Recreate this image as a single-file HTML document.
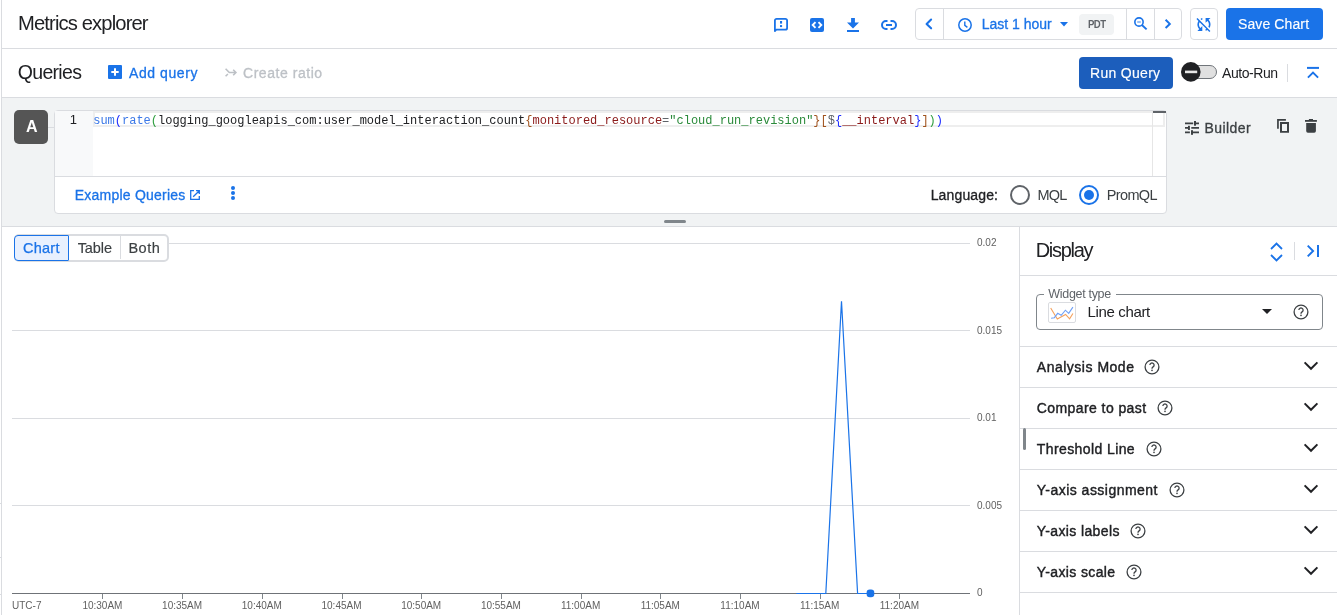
<!DOCTYPE html>
<html><head><meta charset="utf-8">
<style>
*{box-sizing:border-box;margin:0;padding:0}
html,body{width:1337px;height:615px;overflow:hidden;background:#fff;font-family:"Liberation Sans",sans-serif;color:#202124}
.a{position:absolute}
.t{position:absolute;white-space:nowrap;line-height:1}
#root{position:absolute;left:0;top:0;width:1337px;height:615px;will-change:transform}
svg{position:absolute;overflow:visible}
</style></head><body><div id="root">
<div class="a" style="left:1px;top:0px;width:1px;height:615px;background:#dadce0;"></div>
<div class="a" style="left:0px;top:503px;width:1px;height:1px;background:#dadce0;"></div>
<div class="a" style="left:0px;top:557px;width:1px;height:1px;background:#dadce0;"></div>
<div class="a" style="left:0px;top:594px;width:1px;height:1px;background:#dadce0;"></div>
<div class="a" style="left:2px;top:48px;width:1335px;height:1px;background:#dadce0;"></div>
<div class="t" style="top:13.00px;font-size:20.2px;color:#202124;font-family:'Liberation Sans',sans-serif;letter-spacing:-0.867px;left:18px;">Metrics explorer</div>
<svg style="left:774px;top:18px" width="14" height="14" viewBox="0 0 14 14"><path d="M0.9 13V2.6A1.7 1.7 0 0 1 2.6 0.9h8.8A1.7 1.7 0 0 1 13.1 2.6v7.3a1.7 1.7 0 0 1-1.7 1.7H2.3L0.9 13z" stroke="#1a73e8" stroke-width="1.8" stroke-linejoin="round" fill="none"/><rect x="6" y="3" width="2.1" height="2.6" fill="#1a73e8"/><rect x="6" y="7.1" width="2.1" height="2" fill="#1a73e8"/></svg>
<svg style="left:810px;top:18px" width="14" height="14" viewBox="0 0 14 14"><rect x="0" y="0" width="14" height="14" rx="2" fill="#1a73e8"/><path d="M5.5 4.2L2.7 7l2.8 2.8M8.5 4.2L11.3 7 8.5 9.8" stroke="#fff" stroke-width="1.9" fill="none"/></svg>
<svg style="left:847px;top:18px" width="12" height="14" viewBox="0 0 12 14"><path fill="#1a73e8" d="M4.1 0h3.8v4.5H12L6 10.6 0 4.5H4.1z"/><rect x="0" y="12" width="12" height="2" fill="#1a73e8"/></svg>
<svg style="left:881px;top:20px" width="16" height="10" viewBox="0 0 16 10"><path d="M6.5 1H5a4 4 0 0 0 0 8h1.5M9.5 1H11a4 4 0 0 1 0 8H9.5M5 5h6" stroke="#1a73e8" stroke-width="2" fill="none"/></svg>
<div class="a" style="left:915px;top:8px;width:267px;height:32px;border:1px solid #dadce0;border-radius:4px;"></div>
<div class="a" style="left:943px;top:9px;width:1px;height:30px;background:#dadce0;"></div>
<div class="a" style="left:1126px;top:9px;width:1px;height:30px;background:#dadce0;"></div>
<div class="a" style="left:1154px;top:9px;width:1px;height:30px;background:#dadce0;"></div>
<svg style="left:925px;top:19px" width="8" height="11" viewBox="0 0 8 11"><path d="M6.1 0.5L1.6 4.9 6.1 9.3" stroke="#1a73e8" stroke-width="2.1" stroke-linecap="round" stroke-linejoin="round" fill="none"/></svg>
<svg style="left:958px;top:18px" width="15" height="15" viewBox="0 0 15 15"><circle cx="7" cy="7" r="6.2" stroke="#1a73e8" stroke-width="1.5" fill="none"/><path d="M6.8 3.6v3.8l2.6 2" stroke="#1a73e8" stroke-width="1.4" fill="none"/></svg>
<div class="t" style="top:17.00px;font-size:14px;color:#1a73e8;font-family:'Liberation Sans',sans-serif;left:981.7px;-webkit-text-stroke:0.3px currentColor;">Last 1 hour</div>
<svg style="left:1060px;top:22px" width="8" height="5" viewBox="0 0 8 5"><path d="M0 0h8L4 4.5z" fill="#1a73e8"/></svg>
<div class="a" style="left:1079px;top:14px;width:35px;height:21px;background:#f1f3f4;border-radius:4px;"></div>
<div class="t" style="top:20.00px;font-size:9.6px;color:#5f6368;font-family:'Liberation Sans',sans-serif;font-weight:700;letter-spacing:-0.45px;left:1087.9px;transform:scaleY(1.16);transform-origin:0 8.6px;">PDT</div>
<svg style="left:1133px;top:17px" width="15" height="14" viewBox="0 0 15 14"><circle cx="6" cy="5" r="4.15" stroke="#1a73e8" stroke-width="1.6" fill="none"/><path d="M8.9 8L13.6 12.4" stroke="#1a73e8" stroke-width="1.9"/><path d="M4.2 5h3.6" stroke="#1a73e8" stroke-width="1.1" opacity="0.8"/></svg>
<svg style="left:1164px;top:19px" width="8" height="10" viewBox="0 0 8 10"><path d="M1.6 0.8L5.8 4.9 1.6 9" stroke="#1a73e8" stroke-width="2" fill="none"/></svg>
<div class="a" style="left:1190px;top:8px;width:28px;height:32px;border:1px solid #dadce0;border-radius:4px;"></div>
<svg style="left:0;top:0" width="1337" height="615" viewBox="0 0 1337 615"><path transform="translate(1194.1,14.6) scale(0.8208333333333333) translate(-0.0,-0.0)" fill="#1a73e8" d="M10 6.35V4.26c-.8.21-1.55.54-2.23.96l1.46 1.46c.25-.12.5-.24.77-.33zm-7.14-.94l2.36 2.36C4.45 8.99 4 10.44 4 12c0 2.21.91 4.2 2.36 5.64L4 20h6v-6l-2.24 2.24C6.68 15.15 6 13.66 6 12c0-1 .25-1.94.68-2.77l8.08 8.08c-.25.13-.5.25-.77.34v2.09c.8-.21 1.55-.54 2.230-.96l2.36 2.36 1.27-1.27L4.14 4.14 2.86 5.41zM20 4h-6v6l2.24-2.24C17.32 8.85 18 10.34 18 12c0 1-.25 1.940-.68 2.77l1.46 1.46C19.550 15.01 20 13.56 20 12c0-2.21-.91-4.2-2.36-5.64L20 4z" /></svg>
<div class="a" style="left:1226px;top:8px;width:97px;height:32px;background:#1a73e8;border-radius:4px;"></div>
<div class="t" style="top:17.00px;font-size:14px;color:#fff;font-family:'Liberation Sans',sans-serif;letter-spacing:0.111px;left:1238px;-webkit-text-stroke:0.15px currentColor;">Save Chart</div>
<div class="a" style="left:2px;top:97px;width:1335px;height:1px;background:#dadce0;"></div>
<div class="t" style="top:63.00px;font-size:19.5px;color:#202124;font-family:'Liberation Sans',sans-serif;letter-spacing:-0.7px;left:17.8px;">Queries</div>
<svg style="left:108px;top:65px" width="14" height="14" viewBox="0 0 14 14"><rect width="14" height="14" rx="1" fill="#1a73e8"/><path d="M7 3.3v7.4M3.3 7h7.4" stroke="#fff" stroke-width="2"/></svg>
<div class="t" style="top:66.00px;font-size:14px;color:#1a73e8;font-family:'Liberation Sans',sans-serif;letter-spacing:0.575px;left:129px;-webkit-text-stroke:0.3px currentColor;">Add query</div>
<svg style="left:0;top:0" width="1337" height="615" viewBox="0 0 1337 615"><path d="M225.6 68.8L229.3 72.5H236M233.2 69.8L235.9 72.5 233.2 75.2M225.6 76.3L227.9 74" stroke="#bdc1c6" stroke-width="1.6" fill="none"/></svg>
<div class="t" style="top:66.00px;font-size:14px;color:#bdc1c6;font-family:'Liberation Sans',sans-serif;letter-spacing:0.545px;left:243px;-webkit-text-stroke:0.3px currentColor;">Create ratio</div>
<div class="a" style="left:1079px;top:57px;width:94px;height:32px;background:#1c5ebc;border-radius:4px;"></div>
<div class="t" style="top:66.00px;font-size:14px;color:#fff;font-family:'Liberation Sans',sans-serif;letter-spacing:0.3px;left:1090px;-webkit-text-stroke:0.15px currentColor;">Run Query</div>
<div class="a" style="left:1186px;top:65px;width:31px;height:14px;background:#e0e0e0;border-radius:7px;border:1px solid #70757a;"></div>
<svg style="left:1181px;top:62px" width="20" height="20" viewBox="0 0 20 20"><circle cx="9.8" cy="9.9" r="9.8" fill="#202124"/><rect x="4" y="8.6" width="12.2" height="2.6" fill="#e8e8e8"/></svg>
<div class="t" style="top:66.00px;font-size:14px;color:#202124;font-family:'Liberation Sans',sans-serif;letter-spacing:-0.429px;left:1222px;">Auto-Run</div>
<div class="a" style="left:1287px;top:64px;width:1px;height:18px;background:#dadce0;"></div>
<svg style="left:1307px;top:67px" width="13" height="12" viewBox="0 0 13 12"><path d="M0 0.9h12" stroke="#1a73e8" stroke-width="2"/><path d="M0.9 10.6L6 5.5 11.1 10.6" stroke="#1a73e8" stroke-width="1.9" fill="none"/></svg>
<div class="a" style="left:2px;top:98px;width:1335px;height:128px;background:#f1f3f4;"></div>
<div class="a" style="left:2px;top:226px;width:1335px;height:1px;background:#dadce0;"></div>
<div class="a" style="left:14px;top:110px;width:34px;height:34px;background:#555555;border-radius:5px;"></div>
<div class="t" style="top:119.00px;font-size:16px;color:#fff;font-family:'Liberation Sans',sans-serif;font-weight:700;left:26px;">A</div>
<div class="a" style="left:48px;top:127px;width:6px;height:1px;background:#dadce0;"></div>
<div class="a" style="left:54px;top:110px;width:1113px;height:104px;border:1px solid #dadce0;border-radius:4px;background:#fff;"></div>
<div class="a" style="left:55px;top:111px;width:38px;height:65px;background:#f8f9fa;"></div>
<div class="a" style="left:55px;top:176px;width:1111px;height:1px;background:#dadce0;"></div>
<div class="t" style="top:113.00px;font-size:13px;color:#202124;font-family:'Liberation Sans',sans-serif;left:69.7px;">1</div>
<div class="a" style="left:93px;top:111px;width:1072px;height:16px;border:2px solid #eeeeee;"></div>
<div class="a" style="left:1152px;top:111px;width:1px;height:65px;background:#e6e6e6;"></div>
<div class="a" style="left:1153px;top:111px;width:13px;height:1.5px;background:#5f6368;"></div>
<div class="t" style="top:114.81px;font-size:12px;color:#202124;font-family:'Liberation Mono',monospace;left:93.2px;"><span style="color:#3b78e7">sum</span><span style="color:#1f2dff">(</span><span style="color:#3b78e7">rate</span><span style="color:#2e9e3e">(</span><span style="color:#202124">logging_googleapis_com:user_model_interaction_count</span><span style="color:#a0521d">{</span><span style="color:#8b1a1a">monitored_resource</span><span style="color:#5f6368">=</span><span style="color:#2a8a3a">"cloud_run_revision"</span><span style="color:#a0521d">}[</span><span style="color:#5f6368">$</span><span style="color:#1f2dff">{</span><span style="color:#8b1a1a">__interval</span><span style="color:#1f2dff">}</span><span style="color:#a0521d">]</span><span style="color:#2e9e3e">)</span><span style="color:#1f2dff">)</span></div>
<div class="t" style="top:188.00px;font-size:14px;color:#1a73e8;font-family:'Liberation Sans',sans-serif;letter-spacing:0.236px;left:74.7px;-webkit-text-stroke:0.3px currentColor;">Example Queries</div>
<svg style="left:190px;top:190px" width="10" height="10" viewBox="0 0 10 10"><path d="M4 0.7H0.7v8.6h8.6V6M6 0.7h3.3V4M9.3 0.7L3.2 6.8" stroke="#1a73e8" stroke-width="1.3" fill="none"/></svg>
<svg style="left:231px;top:186px" width="4" height="14" viewBox="0 0 4 14"><circle cx="2" cy="2" r="2" fill="#1a73e8"/><circle cx="2" cy="7" r="2" fill="#1a73e8"/><circle cx="2" cy="12" r="2" fill="#1a73e8"/></svg>
<div class="t" style="top:188.00px;font-size:14px;color:#202124;font-family:'Liberation Sans',sans-serif;letter-spacing:0.137px;left:930.7px;-webkit-text-stroke:0.3px currentColor;">Language:</div>
<svg style="left:1010px;top:185px" width="20" height="20" viewBox="0 0 20 20"><circle cx="10" cy="10" r="9" stroke="#5f6368" stroke-width="2" fill="none"/></svg>
<div class="t" style="top:188.00px;font-size:14.5px;color:#3c4043;font-family:'Liberation Sans',sans-serif;letter-spacing:-0.9px;left:1037.6px;">MQL</div>
<svg style="left:1079px;top:185px" width="20" height="20" viewBox="0 0 20 20"><circle cx="10" cy="10" r="9" stroke="#1a73e8" stroke-width="2" fill="none"/><circle cx="10" cy="10" r="5" fill="#1a73e8"/></svg>
<div class="t" style="top:188.00px;font-size:14.5px;color:#3c4043;font-family:'Liberation Sans',sans-serif;letter-spacing:-0.62px;left:1106.7px;">PromQL</div>
<svg style="left:0;top:0" width="1337" height="615" viewBox="0 0 1337 615"><g stroke="#3c4043" stroke-width="1.7"><path d="M1185 123.4H1193.2M1196 123.4H1199M1185 127.9H1188.4M1191.3 127.9H1199M1185 132.4H1189.9M1193 132.4H1199"/></g><g fill="#3c4043"><rect x="1194" y="121" width="2" height="4.7"/><rect x="1188" y="125.8" width="1.9" height="4.2"/><rect x="1191" y="130.2" width="2" height="4.6"/></g></svg>
<div class="t" style="top:121.00px;font-size:14px;color:#3c4043;font-family:'Liberation Sans',sans-serif;letter-spacing:0.4px;left:1204.6px;-webkit-text-stroke:0.3px currentColor;">Builder</div>
<svg style="left:0;top:0" width="1337" height="615" viewBox="0 0 1337 615">
<path d="M1277.1 128.8V119.1h8.8v1.6h-7.1v8.1z" fill="#3c4043"/>
<path fill-rule="evenodd" d="M1280 122h9v10.7h-9zM1282 124v7h5v-7z" fill="#3c4043"/>
<rect x="1305" y="120" width="11.9" height="1.8" fill="#3c4043"/><rect x="1308.9" y="119" width="4.1" height="1.5" fill="#3c4043"/>
<path d="M1306.2 123h9.7v8a1.7 1.7 0 0 1-1.7 1.7h-6.3a1.7 1.7 0 0 1-1.7-1.7z" fill="#3c4043"/>
</svg>
<div class="a" style="left:664px;top:220px;width:22px;height:3px;background:#80868b;border-radius:2px;"></div>
<div class="a" style="left:14px;top:234px;width:155px;height:28px;border:2px solid #dadce0;border-radius:5px;background:#fff;"></div>
<div class="a" style="left:14px;top:235px;width:55px;height:26px;background:#e8f0fe;border:1.5px solid #1a73e8;border-radius:4px 1px 1px 4px;"></div>
<div class="a" style="left:120px;top:236px;width:1px;height:23px;background:#dadce0;"></div>
<div class="t" style="top:241.00px;font-size:14.5px;color:#1a73e8;font-family:'Liberation Sans',sans-serif;letter-spacing:0.25px;left:23px;-webkit-text-stroke:0.25px currentColor;">Chart</div>
<div class="t" style="top:241.00px;font-size:14.5px;color:#3c4043;font-family:'Liberation Sans',sans-serif;letter-spacing:-0.1px;left:77.7px;-webkit-text-stroke:0.15px currentColor;">Table</div>
<div class="t" style="top:241.00px;font-size:14.5px;color:#3c4043;font-family:'Liberation Sans',sans-serif;letter-spacing:0.5px;left:128.4px;-webkit-text-stroke:0.15px currentColor;">Both</div>
<div class="a" style="left:169px;top:243px;width:801px;height:1px;background:#dadce0;"></div>
<div class="a" style="left:12px;top:330px;width:958px;height:1px;background:#dadce0;"></div>
<div class="a" style="left:12px;top:418px;width:958px;height:1px;background:#dadce0;"></div>
<div class="a" style="left:12px;top:505px;width:958px;height:1px;background:#dadce0;"></div>
<div class="a" style="left:12px;top:593px;width:958px;height:1px;background:#6f7378;"></div>
<div class="t" style="top:238.13px;font-size:10px;color:#616161;font-family:'Liberation Sans',sans-serif;left:977px;">0.02</div>
<div class="t" style="top:325.63px;font-size:10px;color:#616161;font-family:'Liberation Sans',sans-serif;left:977px;">0.015</div>
<div class="t" style="top:413.13px;font-size:10px;color:#616161;font-family:'Liberation Sans',sans-serif;left:977px;">0.01</div>
<div class="t" style="top:500.63px;font-size:10px;color:#616161;font-family:'Liberation Sans',sans-serif;left:977px;">0.005</div>
<div class="t" style="top:588.13px;font-size:10px;color:#616161;font-family:'Liberation Sans',sans-serif;left:977px;">0</div>
<div class="t" style="top:600.53px;font-size:10px;color:#616161;font-family:'Liberation Sans',sans-serif;left:12px;">UTC-7</div>
<div class="a" style="left:102px;top:594px;width:1px;height:5px;background:#80868b;"></div>
<div class="t" style="top:600.53px;font-size:10px;color:#616161;font-family:'Liberation Sans',sans-serif;left:102.4px;transform:translateX(-50%);">10:30AM</div>
<div class="a" style="left:182px;top:594px;width:1px;height:5px;background:#80868b;"></div>
<div class="t" style="top:600.53px;font-size:10px;color:#616161;font-family:'Liberation Sans',sans-serif;left:182.10000000000002px;transform:translateX(-50%);">10:35AM</div>
<div class="a" style="left:262px;top:594px;width:1px;height:5px;background:#80868b;"></div>
<div class="t" style="top:600.53px;font-size:10px;color:#616161;font-family:'Liberation Sans',sans-serif;left:261.8px;transform:translateX(-50%);">10:40AM</div>
<div class="a" style="left:342px;top:594px;width:1px;height:5px;background:#80868b;"></div>
<div class="t" style="top:600.53px;font-size:10px;color:#616161;font-family:'Liberation Sans',sans-serif;left:341.5px;transform:translateX(-50%);">10:45AM</div>
<div class="a" style="left:421px;top:594px;width:1px;height:5px;background:#80868b;"></div>
<div class="t" style="top:600.53px;font-size:10px;color:#616161;font-family:'Liberation Sans',sans-serif;left:421.20000000000005px;transform:translateX(-50%);">10:50AM</div>
<div class="a" style="left:501px;top:594px;width:1px;height:5px;background:#80868b;"></div>
<div class="t" style="top:600.53px;font-size:10px;color:#616161;font-family:'Liberation Sans',sans-serif;left:500.9px;transform:translateX(-50%);">10:55AM</div>
<div class="a" style="left:581px;top:594px;width:1px;height:5px;background:#80868b;"></div>
<div class="t" style="top:600.53px;font-size:10px;color:#616161;font-family:'Liberation Sans',sans-serif;left:580.6px;transform:translateX(-50%);">11:00AM</div>
<div class="a" style="left:660px;top:594px;width:1px;height:5px;background:#80868b;"></div>
<div class="t" style="top:600.53px;font-size:10px;color:#616161;font-family:'Liberation Sans',sans-serif;left:660.3px;transform:translateX(-50%);">11:05AM</div>
<div class="a" style="left:740px;top:594px;width:1px;height:5px;background:#80868b;"></div>
<div class="t" style="top:600.53px;font-size:10px;color:#616161;font-family:'Liberation Sans',sans-serif;left:740.0px;transform:translateX(-50%);">11:10AM</div>
<div class="a" style="left:820px;top:594px;width:1px;height:5px;background:#80868b;"></div>
<div class="t" style="top:600.53px;font-size:10px;color:#616161;font-family:'Liberation Sans',sans-serif;left:819.7px;transform:translateX(-50%);">11:15AM</div>
<div class="a" style="left:899px;top:594px;width:1px;height:5px;background:#80868b;"></div>
<div class="t" style="top:600.53px;font-size:10px;color:#616161;font-family:'Liberation Sans',sans-serif;left:899.4px;transform:translateX(-50%);">11:20AM</div>
<svg style="left:0;top:0" width="1337" height="615" viewBox="0 0 1337 615"><path d="M796.4 593.5H825.8L841.5 301.3L857.6 593.5H870" stroke="#1a73e8" stroke-width="1.2" fill="none"/><rect x="866.6" y="589.6" width="7.7" height="7.7" rx="3.2" fill="#1a73e8"/></svg>
<div class="a" style="left:1019px;top:227px;width:1px;height:388px;background:#dadce0;"></div>
<div class="t" style="top:240.00px;font-size:20px;color:#202124;font-family:'Liberation Sans',sans-serif;letter-spacing:-1.283px;left:1035.7px;">Display</div>
<svg style="left:1269.6px;top:242px" width="13" height="20" viewBox="0 0 13 20"><path d="M1 7L6.5 1.6 12 7M1 13l5.5 5.4L12 13" stroke="#1a73e8" stroke-width="1.8" fill="none"/></svg>
<div class="a" style="left:1294px;top:242px;width:1px;height:18px;background:#dadce0;"></div>
<svg style="left:1307px;top:245px" width="13" height="13" viewBox="0 0 13 13"><path d="M0.7 0.6l5.4 5.4L0.7 11.4" stroke="#1a73e8" stroke-width="1.9" fill="none"/><path d="M11 0v12" stroke="#1a73e8" stroke-width="2"/></svg>
<div class="a" style="left:1020px;top:275px;width:317px;height:1px;background:#dadce0;"></div>
<div class="a" style="left:1036px;top:294px;width:287px;height:36px;border:1px solid #80868b;border-radius:4px;"></div>
<div class="a" style="left:1044px;top:290px;width:72px;height:8px;background:#fff;"></div>
<div class="t" style="top:288.00px;font-size:12.5px;color:#5f6368;font-family:'Liberation Sans',sans-serif;letter-spacing:-0.31px;left:1048.3px;">Widget type</div>
<div class="a" style="left:1048px;top:302px;width:28px;height:21px;border:1px solid #dadce0;border-radius:2px;background:#fff;"></div>
<svg style="left:0;top:0" width="1337" height="615" viewBox="0 0 1337 615"><path d="M1050.7 308L1057.3 319 1065.6 314.4 1069.6 318.8 1072.9 313.5" stroke="#f4a15d" stroke-width="1.1" fill="none"/><path d="M1051.1 318.3L1054.4 317.7 1057.7 313.3 1061.2 315.3 1065.4 310.2 1068.7 313.3 1072.9 307.1" stroke="#6fa0f6" stroke-width="1.1" fill="none"/></svg>
<div class="t" style="top:304.00px;font-size:15px;color:#202124;font-family:'Liberation Sans',sans-serif;letter-spacing:-0.333px;left:1087.4px;">Line chart</div>
<svg style="left:1262px;top:309px" width="10" height="5" viewBox="0 0 10 5"><path d="M0 0h10L5 5z" fill="#202124"/></svg>
<svg style="left:1293px;top:303.7px" width="16" height="16" viewBox="0 0 16 16"><circle cx="8" cy="8" r="6.9" stroke="#3c4043" stroke-width="1.3" fill="none"/><path d="M5.9 6.1a2.1 2.1 0 1 1 3.2 1.8c-.8.5-1.1.9-1.1 1.8" stroke="#3c4043" stroke-width="1.3" fill="none"/><circle cx="8" cy="11.4" r="0.8" fill="#3c4043"/></svg>
<div class="a" style="left:1020px;top:346px;width:317px;height:1px;background:#dadce0;"></div>
<div class="t" style="top:360.00px;font-size:14px;color:#202124;font-family:'Liberation Sans',sans-serif;letter-spacing:0.508px;left:1036.8px;-webkit-text-stroke:0.4px currentColor;">Analysis Mode</div>
<svg style="left:1144px;top:359px" width="16" height="16" viewBox="0 0 16 16"><circle cx="8" cy="8" r="6.9" stroke="#3c4043" stroke-width="1.3" fill="none"/><path d="M5.9 6.1a2.1 2.1 0 1 1 3.2 1.8c-.8.5-1.1.9-1.1 1.8" stroke="#3c4043" stroke-width="1.3" fill="none"/><circle cx="8" cy="11.4" r="0.8" fill="#3c4043"/></svg>
<svg style="left:1303px;top:361px" width="16" height="10" viewBox="0 0 16 10"><path d="M1.6 1.4L8 7.8 14.4 1.4" stroke="#202124" stroke-width="2" fill="none"/></svg>
<div class="a" style="left:1020px;top:387px;width:317px;height:1px;background:#dadce0;"></div>
<div class="t" style="top:401.00px;font-size:14px;color:#202124;font-family:'Liberation Sans',sans-serif;letter-spacing:0.414px;left:1036.8px;-webkit-text-stroke:0.4px currentColor;">Compare to past</div>
<svg style="left:1157px;top:400px" width="16" height="16" viewBox="0 0 16 16"><circle cx="8" cy="8" r="6.9" stroke="#3c4043" stroke-width="1.3" fill="none"/><path d="M5.9 6.1a2.1 2.1 0 1 1 3.2 1.8c-.8.5-1.1.9-1.1 1.8" stroke="#3c4043" stroke-width="1.3" fill="none"/><circle cx="8" cy="11.4" r="0.8" fill="#3c4043"/></svg>
<svg style="left:1303px;top:402px" width="16" height="10" viewBox="0 0 16 10"><path d="M1.6 1.4L8 7.8 14.4 1.4" stroke="#202124" stroke-width="2" fill="none"/></svg>
<div class="a" style="left:1020px;top:428px;width:317px;height:1px;background:#dadce0;"></div>
<div class="t" style="top:442.00px;font-size:14px;color:#202124;font-family:'Liberation Sans',sans-serif;letter-spacing:0.4px;left:1036.8px;-webkit-text-stroke:0.4px currentColor;">Threshold Line</div>
<svg style="left:1146px;top:441px" width="16" height="16" viewBox="0 0 16 16"><circle cx="8" cy="8" r="6.9" stroke="#3c4043" stroke-width="1.3" fill="none"/><path d="M5.9 6.1a2.1 2.1 0 1 1 3.2 1.8c-.8.5-1.1.9-1.1 1.8" stroke="#3c4043" stroke-width="1.3" fill="none"/><circle cx="8" cy="11.4" r="0.8" fill="#3c4043"/></svg>
<svg style="left:1303px;top:443px" width="16" height="10" viewBox="0 0 16 10"><path d="M1.6 1.4L8 7.8 14.4 1.4" stroke="#202124" stroke-width="2" fill="none"/></svg>
<div class="a" style="left:1020px;top:469px;width:317px;height:1px;background:#dadce0;"></div>
<div class="t" style="top:483.00px;font-size:14px;color:#202124;font-family:'Liberation Sans',sans-serif;letter-spacing:0.475px;left:1036.8px;-webkit-text-stroke:0.4px currentColor;">Y-axis assignment</div>
<svg style="left:1169.2px;top:482px" width="16" height="16" viewBox="0 0 16 16"><circle cx="8" cy="8" r="6.9" stroke="#3c4043" stroke-width="1.3" fill="none"/><path d="M5.9 6.1a2.1 2.1 0 1 1 3.2 1.8c-.8.5-1.1.9-1.1 1.8" stroke="#3c4043" stroke-width="1.3" fill="none"/><circle cx="8" cy="11.4" r="0.8" fill="#3c4043"/></svg>
<svg style="left:1303px;top:484px" width="16" height="10" viewBox="0 0 16 10"><path d="M1.6 1.4L8 7.8 14.4 1.4" stroke="#202124" stroke-width="2" fill="none"/></svg>
<div class="a" style="left:1020px;top:510px;width:317px;height:1px;background:#dadce0;"></div>
<div class="t" style="top:524.00px;font-size:14px;color:#202124;font-family:'Liberation Sans',sans-serif;letter-spacing:0.375px;left:1036.8px;-webkit-text-stroke:0.4px currentColor;">Y-axis labels</div>
<svg style="left:1130.1px;top:523px" width="16" height="16" viewBox="0 0 16 16"><circle cx="8" cy="8" r="6.9" stroke="#3c4043" stroke-width="1.3" fill="none"/><path d="M5.9 6.1a2.1 2.1 0 1 1 3.2 1.8c-.8.5-1.1.9-1.1 1.8" stroke="#3c4043" stroke-width="1.3" fill="none"/><circle cx="8" cy="11.4" r="0.8" fill="#3c4043"/></svg>
<svg style="left:1303px;top:525px" width="16" height="10" viewBox="0 0 16 10"><path d="M1.6 1.4L8 7.8 14.4 1.4" stroke="#202124" stroke-width="2" fill="none"/></svg>
<div class="a" style="left:1020px;top:551px;width:317px;height:1px;background:#dadce0;"></div>
<div class="t" style="top:565.00px;font-size:14px;color:#202124;font-family:'Liberation Sans',sans-serif;letter-spacing:0.373px;left:1036.8px;-webkit-text-stroke:0.4px currentColor;">Y-axis scale</div>
<svg style="left:1126.1px;top:564px" width="16" height="16" viewBox="0 0 16 16"><circle cx="8" cy="8" r="6.9" stroke="#3c4043" stroke-width="1.3" fill="none"/><path d="M5.9 6.1a2.1 2.1 0 1 1 3.2 1.8c-.8.5-1.1.9-1.1 1.8" stroke="#3c4043" stroke-width="1.3" fill="none"/><circle cx="8" cy="11.4" r="0.8" fill="#3c4043"/></svg>
<svg style="left:1303px;top:566px" width="16" height="10" viewBox="0 0 16 10"><path d="M1.6 1.4L8 7.8 14.4 1.4" stroke="#202124" stroke-width="2" fill="none"/></svg>
<div class="a" style="left:1020px;top:592px;width:317px;height:1px;background:#dadce0;"></div>
<div class="a" style="left:1023px;top:428px;width:3px;height:22px;background:#80868b;border-radius:2px;"></div>
</div></body></html>
